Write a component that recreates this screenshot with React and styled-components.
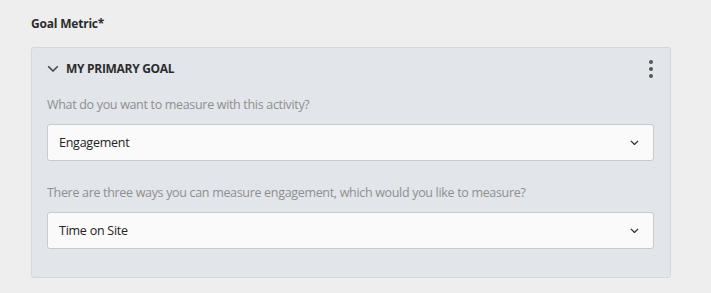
import React from "react";
import styled, { createGlobalStyle } from "styled-components";

const GlobalStyle = createGlobalStyle`
  html, body {
    margin: 0;
    padding: 0;
    background: #eeeeee;
    font-family: "Open Sans", "Liberation Sans", sans-serif;
  }
`;

const Page = styled.div`
  width: 711px;
  height: 293px;
  box-sizing: border-box;
  padding: 15px 40px 0 31px;
`;

const FieldLabel = styled.div`
  font-size: 12px;
  font-weight: 700;
  letter-spacing: -0.2px;
  color: #2c2c2c;
  line-height: 18px;
  margin-bottom: 14px;
`;

const Panel = styled.div`
  background: #e2e5ea;
  border: 1px solid #cfd9e2;
  border-radius: 3px;
  padding: 0 15px 28px 15px;
`;

const PanelHeader = styled.div`
  display: flex;
  align-items: center;
  height: 39px;
  margin-top: 1px;
`;

const Title = styled.div`
  flex: 1;
  display: flex;
  align-items: center;
  gap: 7px;
  font-size: 12px;
  font-weight: 700;
  letter-spacing: -0.3px;
  color: #2c2c2c;
`;

const MoreButton = styled.div`
  display: flex;
  flex-direction: column;
  gap: 3px;
  margin-right: 2px;
`;

const Dot = styled.span`
  width: 4px;
  height: 4px;
  border-radius: 50%;
  background: #555;
`;

const Question = styled.div`
  font-size: 12.5px;
  letter-spacing: -0.32px;
  color: #8f8f8f;
  line-height: 18px;
  margin-top: ${(p) => p.$top}px;
  margin-bottom: 10px;
`;

const Select = styled.div`
  display: flex;
  align-items: center;
  justify-content: space-between;
  height: 35px;
  margin-right: 1px;
  padding: 0 14px 0 11px;
  background: #fafafa;
  border: 1px solid #cacaca;
  border-radius: 3px;
  font-size: 12.5px;
  letter-spacing: -0.25px;
  color: #222;
`;

const Chevron = ({ size = 10, color = "#333", width = 1.4 }) => (
  <svg width={size} height={size * 0.6} viewBox="0 0 10 6">
    <path d="M1 1 L5 5 L9 1" fill="none" stroke={color} strokeWidth={width} />
  </svg>
);

export default function App() {
  return (
    <>
      <GlobalStyle />
      <Page>
        <FieldLabel>Goal Metric*</FieldLabel>
        <Panel>
          <PanelHeader>
            <Title>
              <Chevron size={12} color="#444" width={1.3} />
              MY PRIMARY GOAL
            </Title>
            <MoreButton>
              <Dot />
              <Dot />
              <Dot />
            </MoreButton>
          </PanelHeader>
          <Question $top={8}>What do you want to measure with this activity?</Question>
          <Select>
            Engagement
            <Chevron size={9} color="#333" width={1.5} />
          </Select>
          <Question $top={23}>
            There are three ways you can measure engagement, which would you like to measure?
          </Question>
          <Select>
            Time on Site
            <Chevron size={9} color="#333" width={1.5} />
          </Select>
        </Panel>
      </Page>
    </>
  );
}
